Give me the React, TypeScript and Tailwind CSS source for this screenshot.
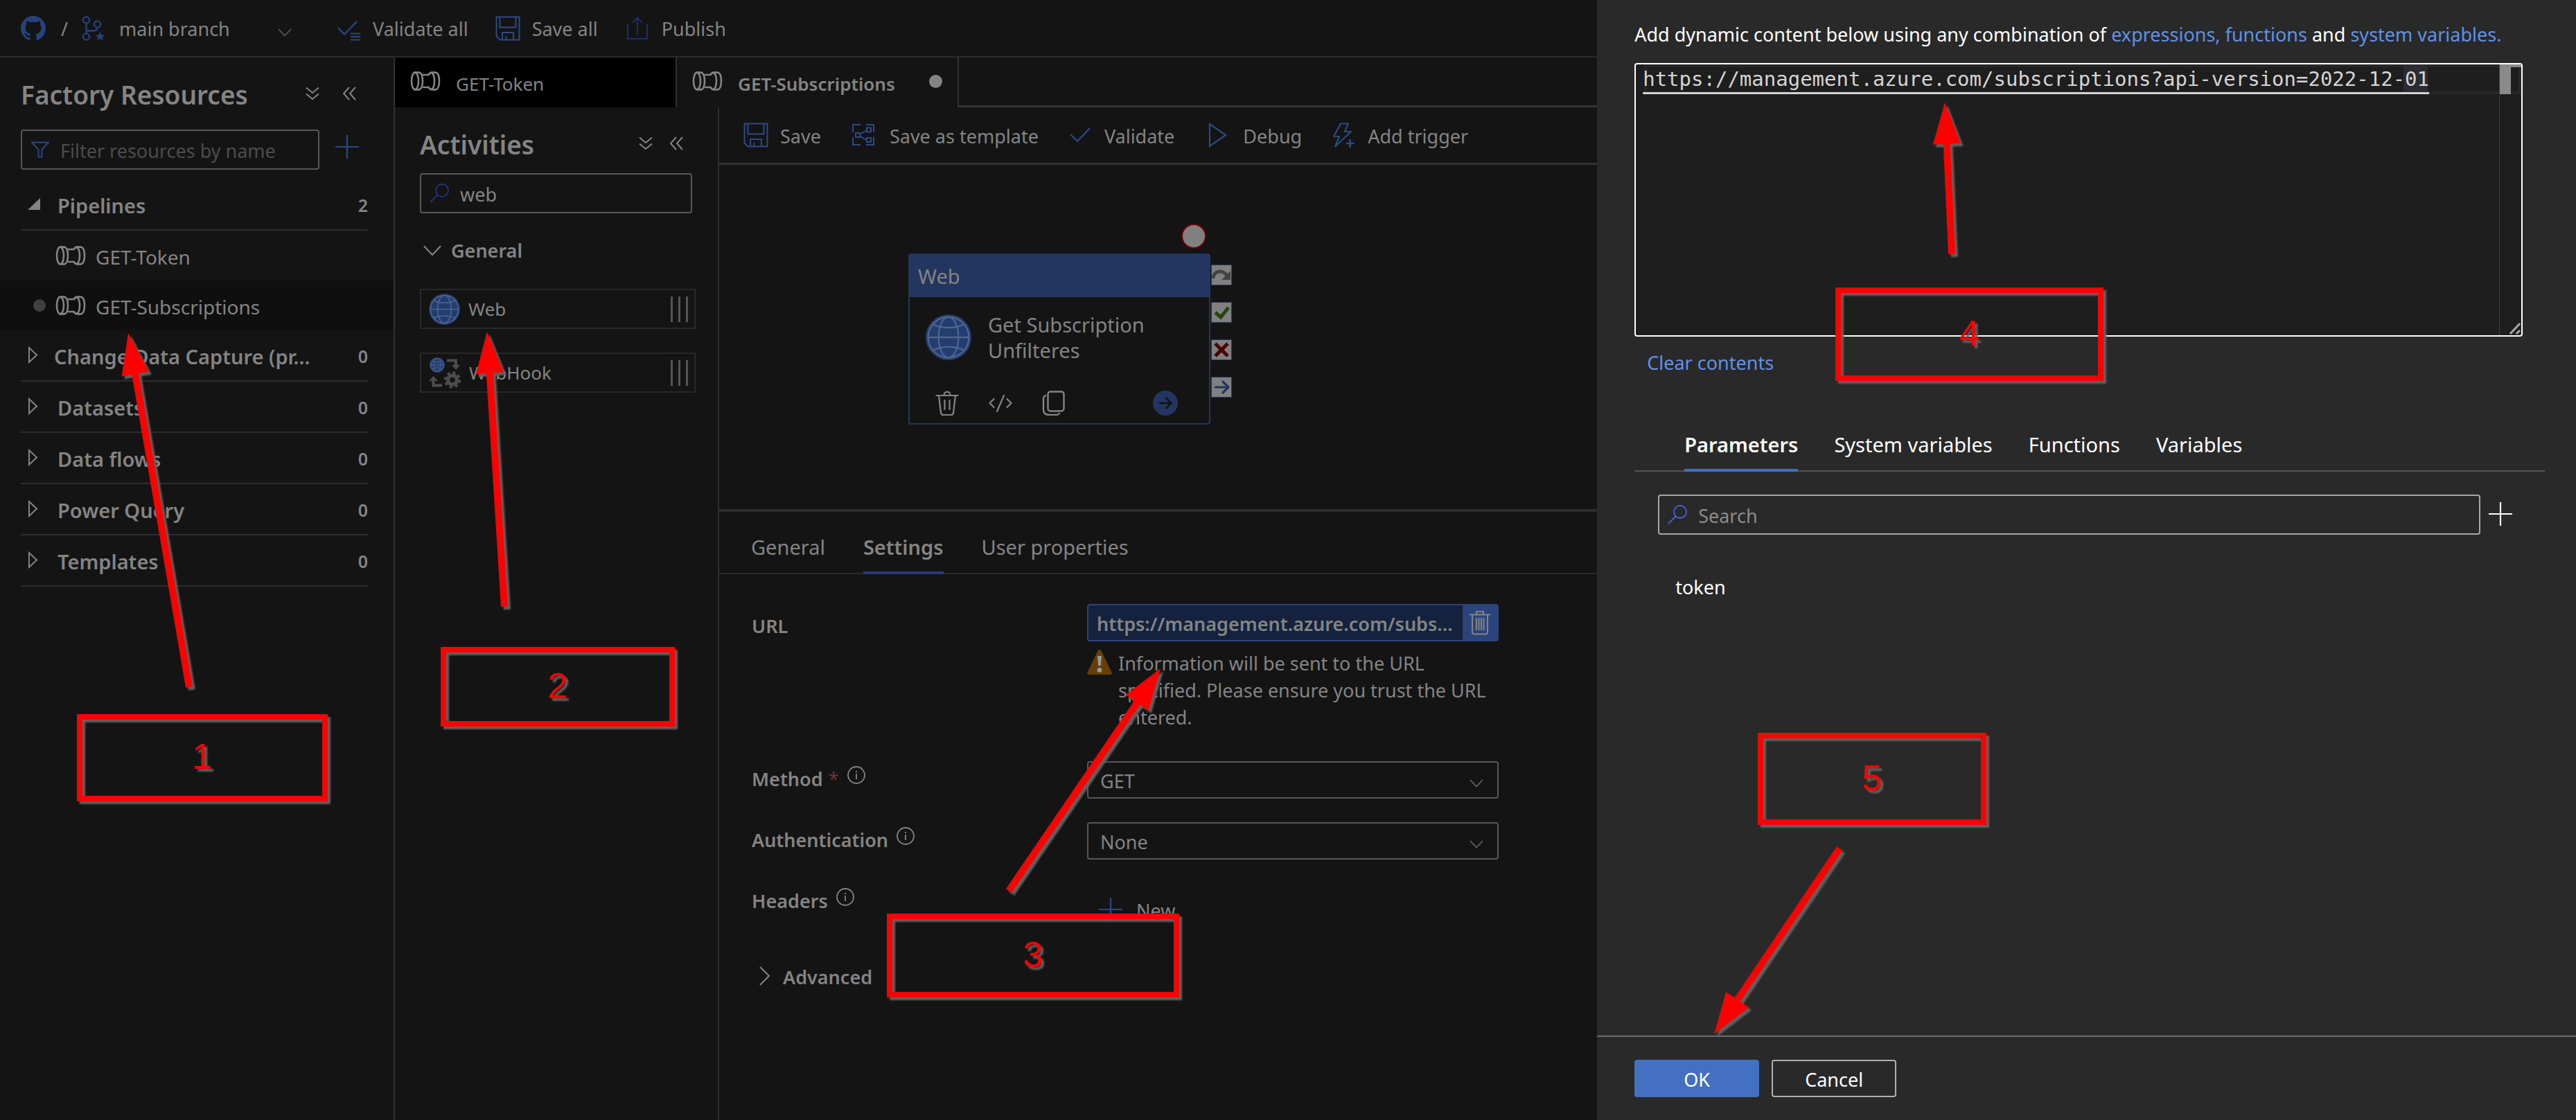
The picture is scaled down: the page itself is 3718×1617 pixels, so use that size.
import type { ReactNode } from "react";

interface IconProps {
  className?: string;
}

interface Point {
  x: number;
  y: number;
}

function GithubIcon() {
  return (
    <svg width="36" height="36" viewBox="0 0 16 16" fill="#27427c" className="shrink-0">
      <path d="M8 0C3.58 0 0 3.58 0 8c0 3.54 2.29 6.53 5.47 7.59.4.07.55-.17.55-.38 0-.19-.01-.82-.01-1.49-2.01.37-2.53-.49-2.69-.94-.09-.23-.48-.94-.82-1.13-.28-.15-.68-.52-.01-.53.63-.01 1.08.58 1.23.82.72 1.21 1.87.87 2.33.66.07-.52.28-.87.51-1.07-1.78-.2-3.64-.89-3.64-3.95 0-.87.31-1.59.82-2.15-.08-.2-.36-1.02.08-2.12 0 0 .67-.21 2.2.82.64-.18 1.32-.27 2-.27s1.36.09 2 .27c1.53-1.04 2.2-.82 2.2-.82.44 1.1.16 1.92.08 2.12.51.56.82 1.27.82 2.15 0 3.07-1.87 3.75-3.65 3.95.29.25.54.73.54 1.48 0 1.07-.01 1.93-.01 2.2 0 .21.15.46.55.38A8.013 8.013 0 0 0 16 8c0-4.42-3.58-8-8-8z" />
    </svg>
  );
}

function PipelineIcon({ className = "text-[#848484]" }: IconProps) {
  return (
    <svg width="44" height="28" viewBox="0 0 44 28" fill="none" stroke="currentColor" strokeWidth="2.6" className={`shrink-0 ${className}`}>
      <ellipse cx="7" cy="14" rx="5" ry="12.4" />
      <path d="M7 1.6h6c3.4 1 5 6.8 5 12.4s-1.6 11.4-5 12.4H7" />
      <path d="M18 5h9M18 23h9" />
      <path d="M37 1.6h-6c-2 0-3.5 1.4-4.5 3.8M37 26.4h-6c-2 0-3.5-1.4-4.5-3.8" />
      <path d="M30 1.8c3.4 1 5 6.6 5 12.2s-1.6 11.2-5 12.2" />
      <path d="M37 1.6c3.4 1 5 6.8 5 12.4s-1.6 11.4-5 12.4" />
    </svg>
  );
}

function BranchIcon() {
  return (
    <svg width="34" height="36" viewBox="0 0 34 36" fill="none" stroke="#27427c" strokeWidth="2.4">
      <circle cx="6.5" cy="6" r="4.6" />
      <circle cx="6.5" cy="30" r="4.6" />
      <circle cx="22.5" cy="12" r="4.6" />
      <path d="M6.5 10.6v14.8M6.5 21.5h9.5c4 0 6.5-2 6.5-5" />
      <path d="M26.5 22.5l2 5h5l-4 3.2 1.5 5-4.5-3-4.5 3 1.5-5-4-3.2h5z" fill="#27427c" stroke="none" />
    </svg>
  );
}

function ChevronDown({ className = "text-[#848484]", wide = false }: IconProps & { wide?: boolean }) {
  return (
    <svg width={wide ? 28 : 20} height={wide ? 16 : 12} viewBox="0 0 20 12" fill="none" stroke="currentColor" strokeWidth="1.6" className={`shrink-0 ${className}`}>
      <path d="M1 1l9 9.5L19 1" />
    </svg>
  );
}

function DoubleChevronDown() {
  return (
    <svg width="20" height="20" viewBox="0 0 20 20" fill="none" stroke="#848484" strokeWidth="2">
      <path d="M1 1.5l9 7.5 9-7.5M1 10.5l9 7.5 9-7.5" />
    </svg>
  );
}

function DoubleChevronLeft() {
  return (
    <svg width="20" height="20" viewBox="0 0 20 20" fill="none" stroke="#848484" strokeWidth="2">
      <path d="M10 1L2 10l8 9M19 1l-8 9 8 9" />
    </svg>
  );
}

function ValidateAllIcon() {
  return (
    <svg width="34" height="36" viewBox="0 0 34 36" fill="none" stroke="#2a4680" strokeWidth="2.4">
      <path d="M1 17l9 9.5L28 8" />
      <path d="M19 25.5h14M19 30h14M19 34.5h14" strokeWidth="2" />
    </svg>
  );
}

function SaveIcon() {
  return (
    <svg width="36" height="36" viewBox="0 0 36 36" fill="none" stroke="#2c4a86" strokeWidth="2">
      <path d="M1.5 1.5h33v33H6.5l-5-5z" />
      <path d="M6.5 1.5v15h23v-15" />
      <path d="M10 34v-10h16v10M15.5 34v-5" />
    </svg>
  );
}

function PublishIcon() {
  return (
    <svg width="36" height="36" viewBox="0 0 36 36" fill="none" stroke="#1c2d75" strokeWidth="2">
      <path d="M4 12v21h28V12M18 27V3M11 10l7-7.5L25 10" />
    </svg>
  );
}

function TemplateIcon() {
  return (
    <svg width="40" height="36" viewBox="0 0 40 36" fill="none" stroke="#2c4a86" strokeWidth="2">
      <path d="M15 3H4v11M4 21v11h11M23 3h11v11M23 32h11V21" />
      <rect x="8" y="15" width="6" height="6" />
      <rect x="24" y="7.5" width="6" height="6" />
      <rect x="24" y="22" width="6" height="6" />
      <path d="M14 17l10-6M14 19.5l10 6" />
    </svg>
  );
}

function CheckIcon() {
  return (
    <svg width="36" height="36" viewBox="0 0 36 36" fill="none" stroke="#2c4a86" strokeWidth="2.2">
      <path d="M4 17l10 10L32 8" />
    </svg>
  );
}

function PlayIcon() {
  return (
    <svg width="40" height="36" viewBox="0 0 40 36" fill="none" stroke="#2c4a86" strokeWidth="2.2">
      <path d="M9 2v32l23-16z" />
    </svg>
  );
}

function TriggerIcon() {
  return (
    <svg width="36" height="36" viewBox="0 0 36 36" fill="none" stroke="#2c4a86" strokeWidth="2.2">
      <path d="M14 1.5h11L20 13h9L6 34.5 12 20H4z" strokeLinejoin="round" />
      <path d="M27.5 24v12M21.5 30h12" strokeWidth="2.6" />
    </svg>
  );
}

function FilterIcon() {
  return (
    <svg width="26" height="24" viewBox="0 0 26 24" fill="none" stroke="#2b4686" strokeWidth="2">
      <path d="M1 1.5h24l-9.5 10.5v10.5h-5V12z" />
    </svg>
  );
}

function SearchIcon({ className }: IconProps) {
  return (
    <svg width="28" height="28" viewBox="0 0 28 28" fill="none" stroke="currentColor" strokeWidth="1.8" className={className}>
      <circle cx="18" cy="10" r="9" />
      <path d="M11.5 16.5L1 27" />
    </svg>
  );
}

function PlusIcon({ className }: IconProps) {
  return (
    <svg width="34" height="34" viewBox="0 0 34 34" fill="none" stroke="currentColor" strokeWidth="2.2" className={className}>
      <path d="M17 0v34M0 17h34" />
    </svg>
  );
}

function GlobeIcon({ size, className = "" }: IconProps & { size: number }) {
  return (
    <svg width={size} height={size} viewBox="0 0 46 46" fill="none" stroke="#51658c" strokeWidth="1.6" className={`shrink-0 ${className}`}>
      <circle cx="23" cy="23" r="23" fill="#233d70" stroke="none" />
      <circle cx="23" cy="23" r="20.5" />
      <ellipse cx="23" cy="23" rx="10" ry="20.5" />
      <path d="M2.5 23h41M7.5 10c8 4.5 23 4.5 31 0M7.5 36c8-4.5 23-4.5 31 0" />
    </svg>
  );
}

function WebHookIcon() {
  return (
    <svg width="46" height="46" viewBox="0 0 46 46" fill="none" className="shrink-0">
      <circle cx="12" cy="12" r="11" fill="#233d70" />
      <g stroke="#51658c" strokeWidth="1">
        <circle cx="12" cy="12" r="9.5" />
        <ellipse cx="12" cy="12" rx="5" ry="9.5" />
        <path d="M2.5 12h19M5 6.5c4 2 10 2 14 0M5 17.5c4-2 10-2 14 0" />
      </g>
      <path d="M26 5.5h13v8" stroke="#4c4c4c" strokeWidth="4" />
      <path d="M33 12h12l-6 7z" fill="#4c4c4c" />
      <path d="M19 41.5H6.5V34" stroke="#4c4c4c" strokeWidth="4" />
      <path d="M0 35h13l-6.5-7z" fill="#4c4c4c" />
      <circle cx="34" cy="33.5" r="6.5" stroke="#4c4c4c" strokeWidth="5.5" />
      <circle cx="34" cy="33.5" r="10.5" stroke="#4c4c4c" strokeWidth="3.5" strokeDasharray="4.2 4.05" />
    </svg>
  );
}

function TrashIcon({ className = "text-[#848484]" }: IconProps) {
  return (
    <svg width="34" height="36" viewBox="0 0 34 36" fill="none" stroke="currentColor" strokeWidth="2.2" strokeLinecap="round" strokeLinejoin="round" className={className}>
      <path d="M1.5 7h31M12.5 6.5c0-6.5 9-6.5 9 0M5 7l3 25c.3 2 1.5 3 3.5 3h11c2 0 3.2-1 3.5-3l3-25M13.5 14v13M20.5 14v13" />
    </svg>
  );
}

function CodeIcon() {
  return (
    <svg width="34" height="36" viewBox="0 0 34 36" fill="none" stroke="#848484" strokeWidth="2.2" strokeLinecap="round" strokeLinejoin="round">
      <path d="M7.5 12L1.5 18l6 6M26.5 12l6 6-6 6M22 7L12 30" />
    </svg>
  );
}

function CopyIcon() {
  return (
    <svg width="34" height="36" viewBox="0 0 34 36" fill="none" stroke="#848484" strokeWidth="2.4" strokeLinecap="round">
      <rect x="8.5" y="1.5" width="23" height="28" rx="3.5" />
      <path d="M5 7c-2 1-3 2.5-3 5v15c0 5 3 8 8 8h11c2 0 3-1 4-2" />
    </svg>
  );
}

function InfoIcon() {
  return (
    <svg width="26" height="26" viewBox="0 0 26 26" fill="none" stroke="#848484" strokeWidth="1.8" className="mb-3 ml-3">
      <circle cx="13" cy="13" r="12" />
      <path d="M13 11v8M13 7v2" />
    </svg>
  );
}

function WarningIcon() {
  return (
    <svg width="36" height="36" viewBox="0 0 36 36" className="shrink-0">
      <path d="M15.5 1.5c1-2 4-2 5 0l15 31c.8 2-.2 3.5-2 3.5h-31c-1.8 0-2.8-1.5-2-3.5z" fill="#653f05" />
      <path d="M15 9h6l-1.2 14h-3.6z" fill="#999" />
      <circle cx="18" cy="29.5" r="3.4" fill="#999" />
    </svg>
  );
}

function TreeSection({ name, count, open = false, tight = false }: { name: string; count: number; open?: boolean; tight?: boolean }) {
  return (
    <button className="mr-[37px] ml-[30px] flex h-[74px] items-center border-b-2 border-[#2d2d2d] pt-1 pl-[10px] text-left text-[29px] font-semibold">
      <svg width="18" height="26" viewBox="0 0 18 26" fill="none" className="mb-1 shrink-0">
        {open ? <path d="M18 4v17H0z" fill="#848484" /> : <path d="M2 2v21l11-10.5z" stroke="#848484" strokeWidth="2" />}
      </svg>
      <span className={tight ? "pl-[20px]" : "pl-[25px]"}>{name}</span>
      <span className="ml-auto text-[25px]">{count}</span>
    </button>
  );
}

function ToolbarButton({ icon, label }: { icon: ReactNode; label: string }) {
  return (
    <button className="flex items-center gap-[17px]">
      {icon}
      <span className="pt-1">{label}</span>
    </button>
  );
}

function ActivityRow({ icon, name }: { icon: ReactNode; name: string }) {
  return (
    <div className="mr-8 flex h-[58px] items-center border-2 border-[#292929] pr-[9px] pl-[11px] text-[26px]">
      {icon}
      <span className="ml-3">{name}</span>
      <span className="ml-auto flex gap-2">
        <i className="h-[37px] w-[3px] bg-[#555]" />
        <i className="h-[37px] w-[3px] bg-[#555]" />
        <i className="h-[37px] w-[3px] bg-[#555]" />
      </span>
    </div>
  );
}

function Tab({ label, active = false, bar = "border-[#233f73]" }: { label: string; active?: boolean; bar?: string }) {
  return (
    <button className={`h-[90px] border-b-4 pt-4 text-[29px] ${active ? `${bar} font-semibold` : "border-transparent"}`}>
      {label}
    </button>
  );
}

function SelectBox({ id, value }: { id: string; value: string }) {
  return (
    <div className="relative w-[594px]">
      <select
        id={id}
        className="h-[54px] w-full appearance-none rounded border-2 border-[#585858] bg-transparent pt-1 pl-[17px]"
      >
        <option>{value}</option>
      </select>
      <ChevronDown className="absolute top-[26px] right-[22px] text-[#666]" />
    </div>
  );
}

function Sidebar() {
  return (
    <aside className="flex w-[570px] shrink-0 flex-col border-r-2 border-[#323232]">
      <div className="flex h-[104px] items-center pr-[54px] pl-[30px]">
        <h1 className="pt-1 text-[37px] font-semibold">Factory Resources</h1>
        <button aria-label="Expand all" className="ml-auto">
          <DoubleChevronDown />
        </button>
        <button aria-label="Collapse panel" className="ml-[33px]">
          <DoubleChevronLeft />
        </button>
      </div>
      <div className="mb-[14px] flex items-start pl-[30px]">
        <label className="flex h-[58px] w-[431px] items-center rounded border-2 border-[#585858] pl-[13px]">
          <FilterIcon />
          <input
            aria-label="Filter resources by name"
            placeholder="Filter resources by name"
            className="ml-4 w-[360px] bg-transparent pt-1 placeholder:text-[#4c4c4c]"
          />
        </label>
        <button aria-label="Add new resource" className="mt-2 ml-[23px] text-[#2a4785]">
          <PlusIcon />
        </button>
      </div>
      <TreeSection name="Pipelines" count={2} open />
      <button className="flex h-[72px] items-center pl-[80px] text-[28px]">
        <PipelineIcon />
        <span className="pt-1 pl-[14px]">GET-Token</span>
      </button>
      <button className="flex h-[72px] items-center bg-[#0f0f0f] pl-[48px] text-[28px]">
        <i className="mr-[14px] size-[18px] rounded-full bg-[#404040]" />
        <PipelineIcon />
        <span className="pt-1 pl-[14px]">GET-Subscriptions</span>
      </button>
      <TreeSection name="Change Data Capture (pr..." count={0} tight />
      <TreeSection name="Datasets" count={0} />
      <TreeSection name="Data flows" count={0} />
      <TreeSection name="Power Query" count={0} />
      <TreeSection name="Templates" count={0} />
    </aside>
  );
}

function Activities() {
  return (
    <section className="flex w-[468px] shrink-0 flex-col border-r-2 border-[#2d2d2d] pl-9">
      <div className="flex h-[95px] items-center pt-2 pr-[50px]">
        <h2 className="pt-1 text-[37px] font-semibold">Activities</h2>
        <button aria-label="Expand all" className="ml-auto">
          <DoubleChevronDown />
        </button>
        <button aria-label="Collapse panel" className="ml-[24px]">
          <DoubleChevronLeft />
        </button>
      </div>
      <label className="mr-[37px] flex h-[58px] items-center rounded border-2 border-[#585858] pl-3">
        <SearchIcon className="text-[#24357f]" />
        <input aria-label="Search activities" defaultValue="web" className="ml-4 w-[280px] bg-transparent pt-1" />
      </label>
      <button className="mt-[34px] flex h-10 items-center gap-[13px] pl-1 font-semibold">
        <ChevronDown wide />
        General
      </button>
      <div className="mt-[35px] flex flex-col gap-[34px]">
        <ActivityRow icon={<GlobeIcon size={45} />} name="Web" />
        <ActivityRow icon={<WebHookIcon />} name="WebHook" />
      </div>
    </section>
  );
}

const portClass = "size-[28px] bg-[#808080] outline outline-[#2b3d5f]";

function ActivityNode() {
  return (
    <div className="absolute top-[128px] left-[273px] w-[436px]">
      <i className="absolute -top-[43px] right-[6px] size-[36px] rounded-full border-2 border-[#6e0000] bg-[#808080]" />
      <div className="h-[247px] rounded border-2 border-[#22365f] text-[29px]">
        <div className="flex h-[61px] items-center bg-[#22365f] pl-3">Web</div>
        <div className="flex h-[99px] items-end gap-6 pl-[23px] leading-[37px]">
          <GlobeIcon size={66} className="mb-2" />
          <p className="w-[260px] pb-1">Get Subscription Unfilteres</p>
        </div>
        <div className="mt-9 flex items-center gap-[43px] pl-[37px]">
          <button aria-label="Delete activity">
            <TrashIcon />
          </button>
          <button aria-label="View source">
            <CodeIcon />
          </button>
          <button aria-label="Clone activity">
            <CopyIcon />
          </button>
          <button aria-label="Add output" className="mr-[45px] ml-auto">
            <svg width="36" height="36" viewBox="0 0 36 36" fill="none" stroke="#111" strokeWidth="2.4" strokeLinecap="round" strokeLinejoin="round">
              <circle cx="18" cy="18" r="18" fill="#22365f" stroke="none" />
              <path d="M10 18h17M19 10.5l7.5 7.5-7.5 7.5" />
            </svg>
          </button>
        </div>
      </div>
      <div className="absolute top-[17px] left-[438px] flex flex-col gap-[26px]">
        <svg viewBox="0 0 28 28" fill="none" className={portClass}>
          <path d="M2 19C2 7 18 5 23 17" stroke="#434343" strokeWidth="5" />
          <path d="M27 8v13H14z" fill="#434343" />
        </svg>
        <svg viewBox="0 0 28 28" fill="none" stroke="#24450c" strokeWidth="5" className={portClass}>
          <path d="M5 14l8 7L24 7" />
        </svg>
        <svg viewBox="0 0 28 28" fill="none" stroke="#4b0000" strokeWidth="5" className={portClass}>
          <path d="M5 5l18 18M23 5L5 23" />
        </svg>
        <svg viewBox="0 0 28 28" fill="none" stroke="#22365f" strokeWidth="3.2" strokeLinecap="round" strokeLinejoin="round" className={portClass}>
          <path d="M5 14h19M16 6l8 8-8 8" />
        </svg>
      </div>
    </div>
  );
}

function Settings() {
  return (
    <div className="flex flex-col gap-[34px] pt-[43px] pl-[47px]">
      <div className="mb-[10px] flex items-start">
        <label htmlFor="url" className="w-[484px] pt-3 leading-10 font-semibold">
          URL
        </label>
        <div className="w-[594px]">
          <div className="flex h-[54px] items-stretch overflow-hidden rounded border-2 border-[#2b447c] bg-[#14223d]">
            <input
              id="url"
              readOnly
              value="https://management.azure.com/subs..."
              className="w-[540px] bg-transparent pt-1 pl-3 font-semibold"
            />
            <button aria-label="Remove dynamic content" className="flex w-[50px] items-center justify-center bg-[#2b447c]">
              <svg width="30" height="36" viewBox="0 0 30 36" fill="none" stroke="#848484" strokeWidth="2">
                <path d="M0 6.5h30M10 6V2h10v4M4 7v25c0 2 1 2.5 3 2.5h16c2 0 3-.5 3-2.5V7M10 11v18M13.5 11v18M17 11v18M20.5 11v18" />
              </svg>
            </button>
          </div>
          <div className="mt-3 flex items-start gap-[9px]">
            <WarningIcon />
            <p className="leading-[39px]">
              Information will be sent to the URL
              <br />
              specified. Please ensure you trust the URL
              <br />
              entered.
            </p>
          </div>
        </div>
      </div>
      <div className="flex items-start">
        <label htmlFor="method" className="flex w-[484px] items-center pt-[6px] leading-10 font-semibold">
          Method <span className="ml-2 font-normal text-[#6b3438]">*</span>
          <InfoIcon />
        </label>
        <SelectBox id="method" value="GET" />
      </div>
      <div className="flex items-start">
        <label htmlFor="authentication" className="flex w-[484px] items-center pt-[6px] leading-10 font-semibold">
          Authentication
          <InfoIcon />
        </label>
        <SelectBox id="authentication" value="None" />
      </div>
      <div className="flex h-20 items-start">
        <span className="flex w-[484px] items-center pt-[6px] leading-10 font-semibold">
          Headers
          <InfoIcon />
        </span>
        <button className="mt-4 ml-[17px] flex h-11 items-center gap-5">
          <PlusIcon className="text-[#2a4785]" />
          <span className="pt-1">New</span>
        </button>
      </div>
      <button className="flex h-10 items-center gap-[18px] self-start pl-[11px] font-semibold">
        <svg width="16" height="28" viewBox="0 0 16 28" fill="none" stroke="#848484" strokeWidth="2">
          <path d="M1 1l13 13L1 27" />
        </svg>
        <span className="pt-1">Advanced</span>
      </button>
    </div>
  );
}

function DynamicContentPanel() {
  return (
    <section className="flex w-[38%] shrink-0 flex-col bg-[#292929] text-[27px] text-white">
      <div className="flex-1 pt-[30px] pr-[45px] pl-[54px]">
        <p className="leading-10 whitespace-nowrap">
          Add dynamic content below using any combination of{" "}
          <a href="#expressions" className="text-[#5f92e8]">
            expressions, functions
          </a>{" "}
          and{" "}
          <a href="#variables" className="text-[#5f92e8]">
            system variables.
          </a>
        </p>
        <div className="relative mt-[21px] mr-8 h-[395px] rounded border-2 border-white bg-[#1e1e1e]">
          <div className="absolute top-0 right-0 left-[12px] h-[43px] border-4 border-[#282828]" />
          <div className="absolute top-0 right-[135px] h-[40px] w-[35px] bg-[#2b2c32]" />
          <div className="absolute top-0 right-[31px] h-full w-px bg-[#3c3c3c]" />
          <div className="absolute top-0 right-0 h-1 w-[31px] bg-[#8a8a8a]" />
          <div className="absolute top-0 right-[15px] h-[43px] w-[16px] bg-[#8a8a8a]" />
          <textarea
            aria-label="Expression"
            spellCheck={false}
            defaultValue="https://management.azure.com/subscriptions?api-version=2022-12-01"
            className="absolute inset-0 h-full w-[1240px] resize-none overflow-hidden bg-transparent pl-[10px] font-['DejaVu_Sans_Mono',monospace] text-[29px] leading-[42px] text-[#d4d4d4] underline decoration-3 underline-offset-[9px]"
          />
          <svg width="18" height="20" viewBox="0 0 18 20" stroke="#aaa" strokeWidth="3" className="absolute right-0 bottom-0">
            <path d="M2 18L16 3M11 18l5-5" />
          </svg>
        </div>
        <button className="mt-[18px] ml-[18px] block leading-10 text-[#5f92e8]">Clear contents</button>
        <div className="mt-[47px] flex h-[90px] gap-[52px] border-b-2 border-[#555] pl-[72px]">
          <Tab label="Parameters" active bar="border-[#4370c0]" />
          <Tab label="System variables" />
          <Tab label="Functions" />
          <Tab label="Variables" />
        </div>
        <div className="mt-[33px] mr-[47px] ml-[34px] flex items-start gap-3">
          <label className="flex h-[58px] flex-1 items-center rounded border-2 border-[#a8a8a8] pl-3">
            <SearchIcon className="text-[#4a62d8]" />
            <input
              aria-label="Search parameters"
              placeholder="Search"
              className="ml-4 flex-1 bg-transparent pt-1 placeholder:text-[#8c8c8c]"
            />
          </label>
          <button aria-label="Add parameter" className="mt-[11px]">
            <PlusIcon />
          </button>
        </div>
        <button className="mt-14 ml-[59px] block leading-10">token</button>
      </div>
      <div className="flex h-[122px] items-start gap-[18px] border-t-2 border-[#6c6c6c] pt-[33px] pl-[54px]">
        <button className="h-[54px] w-[180px] rounded bg-[#4370c0] pt-1">OK</button>
        <button className="h-[54px] w-[180px] rounded border-2 border-[#b0b0b0] pt-1">Cancel</button>
      </div>
    </section>
  );
}

// Arrow head is 60 long and 40 wide, drawn from the tip back towards the tail
function arrowPath(tip: Point, tail: Point) {
  const length = Math.hypot(tail.x - tip.x, tail.y - tip.y);
  const ux = (tail.x - tip.x) / length;
  const uy = (tail.y - tip.y) / length;
  const at = (along: number, side: number) =>
    `${tip.x + ux * along - uy * side} ${tip.y + uy * along + ux * side}`;
  return `M${at(0, 0)}L${at(60, 20)}L${at(60, 5)}L${at(length, 5)}L${at(length, -5)}L${at(60, -5)}L${at(60, -20)}Z`;
}

const arrows: { tip: Point; tail: Point }[] = [
  { tip: { x: 185, y: 481 }, tail: { x: 273, y: 992 } },
  { tip: { x: 703, y: 479 }, tail: { x: 728, y: 876 } },
  { tip: { x: 1675, y: 965 }, tail: { x: 1456, y: 1286 } },
  { tip: { x: 2807, y: 148 }, tail: { x: 2817, y: 367 } },
  { tip: { x: 2474, y: 1493 }, tail: { x: 2655, y: 1225 } },
];

const stepClass =
  "absolute flex items-center justify-center border-8 border-[#f00] pb-1 font-['Liberation_Sans',sans-serif] text-[52px] leading-none text-[#f00]";

function Annotations() {
  return (
    <div className="pointer-events-none absolute inset-0 overflow-hidden drop-shadow-[4px_4px_1px_#606060]">
      <svg className="absolute inset-0 h-full w-full" fill="#f00">
        {arrows.map(({ tip, tail }) => (
          <path key={tip.x} d={arrowPath(tip, tail)} />
        ))}
      </svg>
      <div className={`${stepClass} top-[1031px] left-[111px] h-[126px] w-[362px]`}>1</div>
      <div className={`${stepClass} top-[934px] left-[636px] h-[115px] w-[338px]`}>2</div>
      <div className={`${stepClass} top-[1319px] left-[1280px] h-[121px] w-[422px]`}>3</div>
      <div className={`${stepClass} top-[415px] left-[2649px] h-[135px] w-[387px]`}>4</div>
      <div className={`${stepClass} top-[1058px] left-[2537px] h-[133px] w-[330px]`}>5</div>
    </div>
  );
}

export default function App() {
  return (
    <div className="relative flex min-h-screen bg-[#141414] font-['Noto_Sans',sans-serif] text-[27px] text-[#848484]">
      <div className="flex min-w-0 flex-1 flex-col">
        <header className="flex h-[83px] shrink-0 items-center border-b-2 border-[#2b2b2b] pl-[30px]">
          <GithubIcon />
          <span className="mr-5 ml-[22px] pt-1">/</span>
          <BranchIcon />
          <button className="mr-[66px] ml-5 flex w-[249px] items-center justify-between">
            <span className="pt-1">main branch</span>
            <ChevronDown className="mt-3 text-[#5c5c5c]" />
          </button>
          <div className="flex gap-[39px]">
            <ToolbarButton icon={<ValidateAllIcon />} label="Validate all" />
            <ToolbarButton icon={<SaveIcon />} label="Save all" />
            <ToolbarButton icon={<PublishIcon />} label="Publish" />
          </div>
        </header>
        <div className="flex flex-1">
          <Sidebar />
          <main className="flex min-w-0 flex-1 flex-col">
            <div className="flex h-[72px] text-[26px]">
              <button className="flex w-[407px] items-center border-r-2 border-[#323232] bg-black pl-[22px]">
                <PipelineIcon className="mb-1 text-[#848484]" />
                <span className="pt-1 pl-[22px]">GET-Token</span>
              </button>
              <button className="flex w-[407px] items-center border-r-2 border-[#323232] pr-[22px] pl-[22px] font-semibold">
                <PipelineIcon className="mb-1 text-[#848484]" />
                <span className="pt-1 pl-[22px]">GET-Subscriptions</span>
                <i className="mb-1 ml-auto size-[19px] rounded-full bg-[#848484]" />
              </button>
              <div className="flex-1 border-b-3 border-[#323232]" />
            </div>
            <div className="flex flex-1">
              <Activities />
              <div className="flex min-w-0 flex-1 flex-col">
                <div className="flex h-[83px] items-center gap-[42px] border-b-3 border-[#323232] pl-[35px]">
                  <ToolbarButton icon={<SaveIcon />} label="Save" />
                  <ToolbarButton icon={<TemplateIcon />} label="Save as template" />
                  <ToolbarButton icon={<CheckIcon />} label="Validate" />
                  <ToolbarButton icon={<PlayIcon />} label="Debug" />
                  <ToolbarButton icon={<TriggerIcon />} label="Add trigger" />
                </div>
                <div className="relative h-[497px]">
                  <ActivityNode />
                </div>
                <div className="border-t-4 border-[#2b2b2b]">
                  <div className="flex h-[90px] gap-[55px] border-b-2 border-[#2b2b2b] pl-[46px]">
                    <Tab label="General" />
                    <Tab label="Settings" active />
                    <Tab label="User properties" />
                  </div>
                  <Settings />
                </div>
              </div>
            </div>
          </main>
        </div>
      </div>
      <DynamicContentPanel />
      <Annotations />
    </div>
  );
}
